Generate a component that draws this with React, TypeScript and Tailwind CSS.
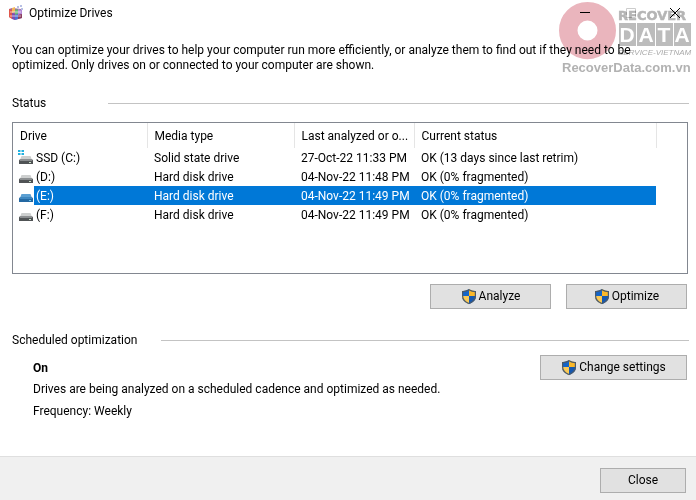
import type { ReactNode } from "react";

type Drive = {
  name: string;
  media: string;
  analyzed: string;
  status: string;
  system?: boolean;
};

const drives: Drive[] = [
  { name: "SSD (C:)", media: "Solid state drive", analyzed: "27-Oct-22 11:33 PM", status: "OK (13 days since last retrim)", system: true },
  { name: "(D:)", media: "Hard disk drive", analyzed: "04-Nov-22 11:48 PM", status: "OK (0% fragmented)" },
  { name: "(E:)", media: "Hard disk drive", analyzed: "04-Nov-22 11:49 PM", status: "OK (0% fragmented)" },
  { name: "(F:)", media: "Hard disk drive", analyzed: "04-Nov-22 11:49 PM", status: "OK (0% fragmented)" },
];

const selected = "(E:)";

function AppIcon() {
  return (
    <svg className="h-4 w-4" viewBox="0 0 16 16" aria-hidden="true">
      <path d="M1 4l3-1 9 1 1 9-7 2-6-3z" fill="#a06a9c" />
      <path d="M1 4l3 1v9l-3-2z" fill="#e0584c" />
      <path d="M4 3l3-1v5l-3 1z" fill="#f2b65a" />
      <path d="M4 8l3 1v6l-3-1z" fill="#7c4fb0" />
      <path d="M7 5l3-1v5l-3 1z" fill="#68b878" />
      <path d="M7 10l3-1v5l-3 1z" fill="#4b72d4" />
      <path d="M10 4l4 1v4l-4 1z" fill="#b48ad8" />
      <path d="M10 10l4-1v4l-4 1z" fill="#8a3d5f" />
      <path d="M2 7h11M2 11h11" stroke="#fff" strokeWidth="0.8" opacity="0.8" />
      <path d="M9 1h2v2H9zM12 0h2v2h-2zM13 3h2v2h-2z" fill="#b8c0e4" />
    </svg>
  );
}

function DriveIcon({ system, active }: { system?: boolean; active?: boolean }) {
  return (
    <svg className="h-4 w-4 shrink-0" viewBox="0 0 16 16" aria-hidden="true">
      {system && <path d="M0 0h2.500v2H0zM3.500 0H6v2H3.500zM0 3h2.500v2H0zM3.500 3H6v2H3.500z" fill="#23b2e0" />}
      <path d="M3.500 6h9l1.500 4H2z" fill={active ? "#5b9fd2" : "#cdcfcf"} />
      <path d="M2 9.500h12q1 0 1 1V14H1v-3.500q0-1 1-1z" fill={active ? "#2468a2" : "#505355"} />
      <path d="M2 9.500h12v1.500H2z" fill={active ? "#3f88c2" : "#8b8e90"} />
      <path d="M11 12h2v1h-2z" fill={active ? "#6fc5e8" : "#c8e0c8"} />
    </svg>
  );
}

function Shield() {
  return (
    <svg className="h-4 w-4 shrink-0" viewBox="0 0 16 16" aria-hidden="true">
      <path d="M8 0C6 1.500 3.500 2 1 2v5c0 4 3 6.500 7 8z" fill="#1565c8" />
      <path d="M8 0c2 1.500 4.500 2 7 2v5H8z" fill="#fbb829" />
      <path d="M1 7h7v8C4 13.500 1 11 1 7z" fill="#fbca55" />
      <path d="M8 7h7c0 4-3 6.500-7 8z" fill="#1558b0" />
      <path d="M8 .7C6 2 3.800 2.600 1.600 2.600V7c0 3.800 2.800 6.100 6.400 7.500 3.600-1.400 6.400-3.700 6.400-7.500V2.600C12.200 2.600 10 2 8 .7z" fill="none" stroke="#4d5a68" strokeWidth="1.200" />
    </svg>
  );
}

function PushButton({ className, children }: { className: string; children: ReactNode }) {
  return (
    <button
      type="button"
      className={`flex h-[25px] items-center justify-center gap-0.5 border border-[#adadad] bg-[#e1e1e1] ${className}`}
    >
      {children}
    </button>
  );
}

function SectionTitle({ className, children }: { className: string; children: ReactNode }) {
  return (
    <div className={`flex items-center pr-[7px] pl-3 ${className}`}>
      <h2>{children}</h2>
      <div className="h-px flex-1 bg-[#c3c3c3]" />
    </div>
  );
}

function Watermark() {
  return (
    <svg
      className="pointer-events-none absolute top-0 right-0 h-20 w-[140px] mix-blend-multiply"
      viewBox="0 0 140 80"
      role="img"
      aria-label="Recover Data Service-Vietnam"
    >
      <circle cx="31.500" cy="30.500" r="19.250" fill="none" stroke="#eab5bd" strokeWidth="18.500" />
      <path d="M22 56q6 5 17 2-4-1-5-3z" fill="#eab5bd" />
      <text x="62" y="20" fontFamily="'DejaVu Sans', sans-serif" fontSize="13" fontWeight="700" fill="#b5b5b5" stroke="#b5b5b5" strokeWidth="0.5">
        RECOVER
      </text>
      <path d="M63 23h17v23H63zM81 23h18v23H81zM100 23h17v23h-17zM118 23h17v23h-17z" fill="#bcbcbc" />
      <g fontFamily="'Liberation Sans', Arial, sans-serif">
        <g fontSize="21" fontWeight="700" fill="#fff" textAnchor="middle">
          <text x="71" y="42">D</text>
          <text x="90" y="42">A</text>
          <text x="108" y="42">T</text>
          <text x="126" y="42">A</text>
        </g>
        <text x="62" y="55" fontSize="8" fontStyle="italic" fill="#aaa">
          SERVICE-VIETNAM
        </text>
        <text x="6" y="72" fontSize="13" fontWeight="700" fill="#b2b2b2">
          RecoverData.com.vn
        </text>
      </g>
    </svg>
  );
}

export default function App() {
  return (
    <div className="relative flex min-h-screen flex-col bg-white font-['Roboto','Segoe_UI',sans-serif] text-[12px] leading-[15px] text-black">
      <header className="flex h-[26px] items-center pl-2">
        <AppIcon />
        <h1 className="ml-[5px] flex-1">Optimize Drives</h1>
        <button type="button" aria-label="Minimize" className="flex h-[26px] w-[46px] items-center justify-center">
          <svg className="h-3 w-3" viewBox="0 0 12 12" aria-hidden="true">
            <path d="M1 5.500h10" stroke="#000" />
          </svg>
        </button>
        <button type="button" aria-label="Maximize" disabled className="flex h-[26px] w-[46px] items-center justify-center">
          <svg className="h-3 w-3" viewBox="0 0 12 12" aria-hidden="true">
            <path d="M1.500 1.500h9v9h-9z" fill="none" stroke="#ccc" />
          </svg>
        </button>
        <button type="button" aria-label="Close window" className="flex h-[26px] w-[42px] items-center justify-center">
          <svg className="h-3 w-3" viewBox="0 0 12 12" aria-hidden="true">
            <path d="M1 1l10 10M11 1L1 11" stroke="#000" />
          </svg>
        </button>
      </header>

      <main className="flex-1">
        <p className="mt-[17px] max-w-[656px] pl-3">
          You can optimize your drives to help your computer run more efficiently, or analyze them to find out if they need to be
          optimized. Only drives on or connected to your computer are shown.
        </p>

        <SectionTitle className="mt-[23px] gap-[62px]">Status</SectionTitle>

        <div className="mt-[11px] mr-2 ml-3 h-[152px] border border-[#828790]">
          <table className="w-full table-fixed border-collapse text-left whitespace-nowrap">
            <colgroup>
              <col className="w-[21px]" />
              <col className="w-[113px]" />
              <col className="w-[147px]" />
              <col className="w-[120px]" />
              <col />
              <col className="w-[31px]" />
            </colgroup>
            <thead>
              <tr className="h-[25px]">
                <th colSpan={2} className="border-r border-[#e5e5e5] pt-0.5 pl-[7px] font-normal">Drive</th>
                <th className="border-r border-[#e5e5e5] pt-0.5 pl-[7px] font-normal">Media type</th>
                <th className="border-r border-[#e5e5e5] pt-0.5 pl-[7px] font-normal">Last analyzed or o...</th>
                <th className="border-r border-[#e5e5e5] pt-0.5 pl-[7px] font-normal">Current status</th>
                <td />
              </tr>
            </thead>
            <tbody>
              {drives.map((drive) => {
                const active = drive.name === selected;
                const cell = active ? "bg-[#0078d7] text-white" : "";
                return (
                  <tr key={drive.name} className="h-[19px]">
                    <td className="pl-[5px]">
                      <DriveIcon system={drive.system} active={active} />
                    </td>
                    <td className={`pt-0.5 pl-[2px] ${cell}`}>{drive.name}</td>
                    <td className={`pt-0.5 pl-[7px] ${cell}`}>{drive.media}</td>
                    <td className={`pt-0.5 pl-[7px] ${cell}`}>{drive.analyzed}</td>
                    <td className={`pt-0.5 pl-[7px] ${cell}`}>{drive.status}</td>
                    <td />
                  </tr>
                );
              })}
            </tbody>
          </table>
        </div>

        <div className="mt-[10px] mr-[9px] flex justify-end gap-[15px]">
          <PushButton className="w-[121px]">
            <Shield />
            Analyze
          </PushButton>
          <PushButton className="w-[121px]">
            <Shield />
            Optimize
          </PushButton>
        </div>

        <SectionTitle className="mt-6 gap-6">Scheduled optimization</SectionTitle>

        <div className="mt-[7px] mr-[9px] ml-[33px] flex items-start justify-between">
          <div className="pt-[6px]">
            <p className="font-bold">On</p>
            <p className="mt-[6px]">Drives are being analyzed on a scheduled cadence and optimized as needed.</p>
            <p className="mt-[7px]">Frequency: Weekly</p>
          </div>
          <PushButton className="w-[147px]">
            <Shield />
            Change settings
          </PushButton>
        </div>
      </main>

      <footer className="flex h-11 justify-end border-t border-[#dfdfdf] bg-[#f0f0f0] pt-[11px] pr-[10px]">
        <PushButton className="w-[86px]">Close</PushButton>
      </footer>

      <Watermark />
    </div>
  );
}
